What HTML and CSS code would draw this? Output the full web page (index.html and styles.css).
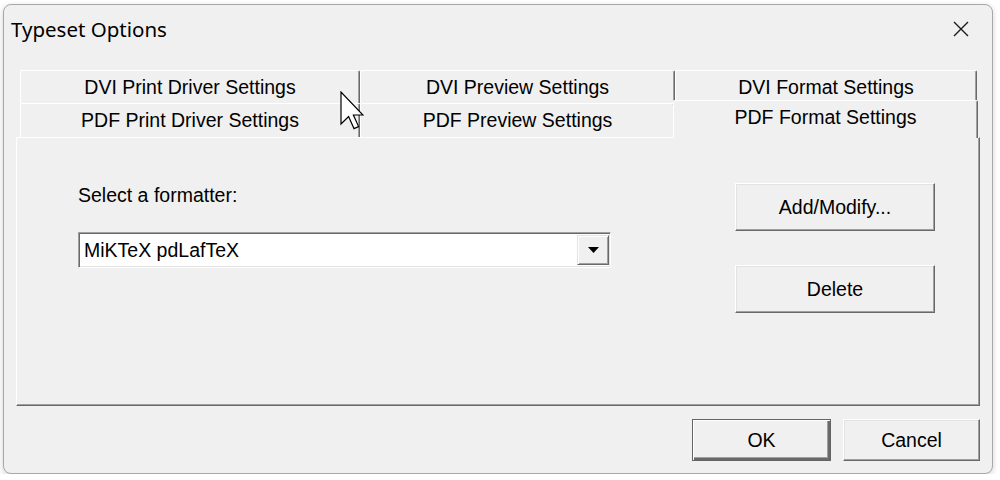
FILE: index.html
```html
<!DOCTYPE html>
<html lang="en">
<head>
    <meta charset="UTF-8">
    <title>Typeset Options</title>
    <link rel="stylesheet" href="styles.css">
</head>
<body>
    <div class="dialog">
        <div class="titlebar">
            <span class="title">Typeset Options</span>
            <svg class="close" width="16" height="16" viewBox="0 0 16 16">
                <path d="M1 1 L15 15 M15 1 L1 15" stroke="#1a1a1a" stroke-width="1.4" fill="none"/>
            </svg>
        </div>

        <!-- Two rows of tabs, the selected one sits in the front row -->
        <div class="tabs">
            <div class="tab-row back">
                <div class="tab tab-print">DVI Print Driver Settings</div>
                <div class="tab tab-preview">DVI Preview Settings</div>
                <div class="tab tab-format">DVI Format Settings</div>
            </div>
            <div class="tab-row front">
                <div class="tab tab-print">PDF Print Driver Settings</div>
                <div class="tab tab-preview">PDF Preview Settings</div>
                <div class="tab tab-format active">PDF Format Settings</div>
            </div>
        </div>

        <div class="panel">
            <div class="formatter">
                <label class="field-label">Select a formatter:</label>
                <div class="combo">
                    <span class="combo-text">MiKTeX pdLafTeX</span>
                    <span class="combo-btn">
                        <svg width="11" height="6" viewBox="0 0 11 6"><path d="M0 0 L11 0 L5.5 6 Z" fill="#000"/></svg>
                    </span>
                </div>
            </div>
            <div class="side-buttons">
                <button type="button" class="btn btn-side">Add/Modify...</button>
                <button type="button" class="btn btn-side">Delete</button>
            </div>
        </div>

        <div class="footer">
            <button type="button" class="btn btn-ok">OK</button>
            <button type="button" class="btn btn-cancel">Cancel</button>
        </div>

        <!-- mouse pointer hovering over the tabs -->
        <svg class="cursor" width="24" height="40" viewBox="0 0 12 20">
            <path d="M0.5 0.5 L0.5 16.5 L4.3 12.8 L7 18.8 L9.3 17.8 L6.7 12 L11.5 12 Z" fill="#fff" stroke="#000" stroke-width="0.6" stroke-linejoin="miter"/>
        </svg>
    </div>
</body>
</html>
```

FILE: styles.css
```css
body {
    margin: 0;
    background: #ffffff;
    font-family: 'Liberation Sans', Arial, sans-serif;
    color: #000;
}
.dialog {
    position: relative;
    box-sizing: border-box;
    width: 990px;
    height: 470px;
    margin: 4px 0 0 3px;
    background: #f0f0f0;
    border: 1px solid #a8a8a8;
    border-radius: 8px;
    box-shadow: 0 2px 6px rgba(0, 0, 0, 0.18);
    overflow: hidden;
}
.titlebar {
    height: 48px;
    display: flex;
    align-items: center;
    justify-content: space-between;
    padding: 0 23px 0 7px;
}
.title {
    font-family: 'Noto Sans', 'Open Sans', sans-serif;
    font-size: 20.5px;
    color: #000;
}
.close {
    display: block;
}
.tabs {
    margin: 17px 0 0 16px;
}
.tab-row {
    display: flex;
}
.tab-row.back {
    height: 33px;
}
.tab-row.front {
    height: 34px;
}
.tab {
    box-sizing: border-box;
    height: 100%;
    display: flex;
    align-items: center;
    justify-content: center;
    font-size: 19.5px;
    border-top: 1px solid #fff;
    border-left: 1px solid #fff;
    border-right: 1px solid #696969;
    border-radius: 2px 2px 0 0;
    box-shadow: inset -1px 0 #a0a0a0;
    background: #f0f0f0;
}
.tab-print {
    width: 340px;
}
.tab-preview {
    width: 315px;
}
.tab-format {
    width: 302px;
}
.tab.active {
    position: relative;
    z-index: 1;
    width: 305px;
    height: 38px;
    margin: -3px 0 0 -2px;
    padding-bottom: 4px;
    border-radius: 2px 2px 0 0;
}
.panel {
    box-sizing: border-box;
    display: flex;
    width: 964px;
    height: 269px;
    margin-left: 12px;
    padding: 45px 44px 0 61px;
    border: 1px solid;
    border-color: #fff #696969 #696969 #fff;
    box-shadow: inset -1px -1px #a0a0a0;
}
.formatter {
    width: 533px;
}
.field-label {
    display: block;
    margin-top: 1px;
    font-size: 19.5px;
    line-height: 22px;
}
.combo {
    box-sizing: border-box;
    display: flex;
    align-items: center;
    height: 36px;
    margin-top: 26px;
    background: #fff;
    border: 1px solid;
    border-color: #a0a0a0 #fff #fff #a0a0a0;
    box-shadow: inset 1px 1px #696969, inset -1px -1px #e3e3e3;
}
.combo-text {
    padding-left: 5px;
    font-size: 19.5px;
}
.combo-btn {
    box-sizing: border-box;
    display: flex;
    align-items: center;
    justify-content: center;
    width: 32px;
    height: 30px;
    margin: 0 1px 0 auto;
    background: #f0f0f0;
    border: 1px solid;
    border-color: #e3e3e3 #696969 #696969 #e3e3e3;
    box-shadow: inset 1px 1px #fff, inset -1px -1px #a0a0a0;
}
.side-buttons {
    display: flex;
    flex-direction: column;
    gap: 34px;
    margin-left: auto;
}
.btn {
    box-sizing: border-box;
    font-family: 'Liberation Sans', Arial, sans-serif;
    font-size: 19.5px;
    color: #000;
    background: #f0f0f0;
    border: 1px solid;
    border-color: #fff #696969 #696969 #fff;
    box-shadow: inset -1px -1px #a0a0a0, inset 1px 1px #e3e3e3;
    padding: 0;
    cursor: pointer;
}
.btn-side {
    width: 200px;
    height: 48px;
}
.footer {
    display: flex;
    justify-content: flex-end;
    gap: 12px;
    margin-top: 13px;
    padding-right: 12px;
}
.btn-ok {
    width: 139px;
    height: 42px;
    border: 1px solid #646464;
    box-shadow: inset 1px 1px #fff, inset -2px -2px #696969, inset -3px -3px #a0a0a0;
}
.btn-cancel {
    width: 137px;
    height: 42px;
}
.cursor {
    position: absolute;
    left: 336px;
    top: 86px;
}
```
